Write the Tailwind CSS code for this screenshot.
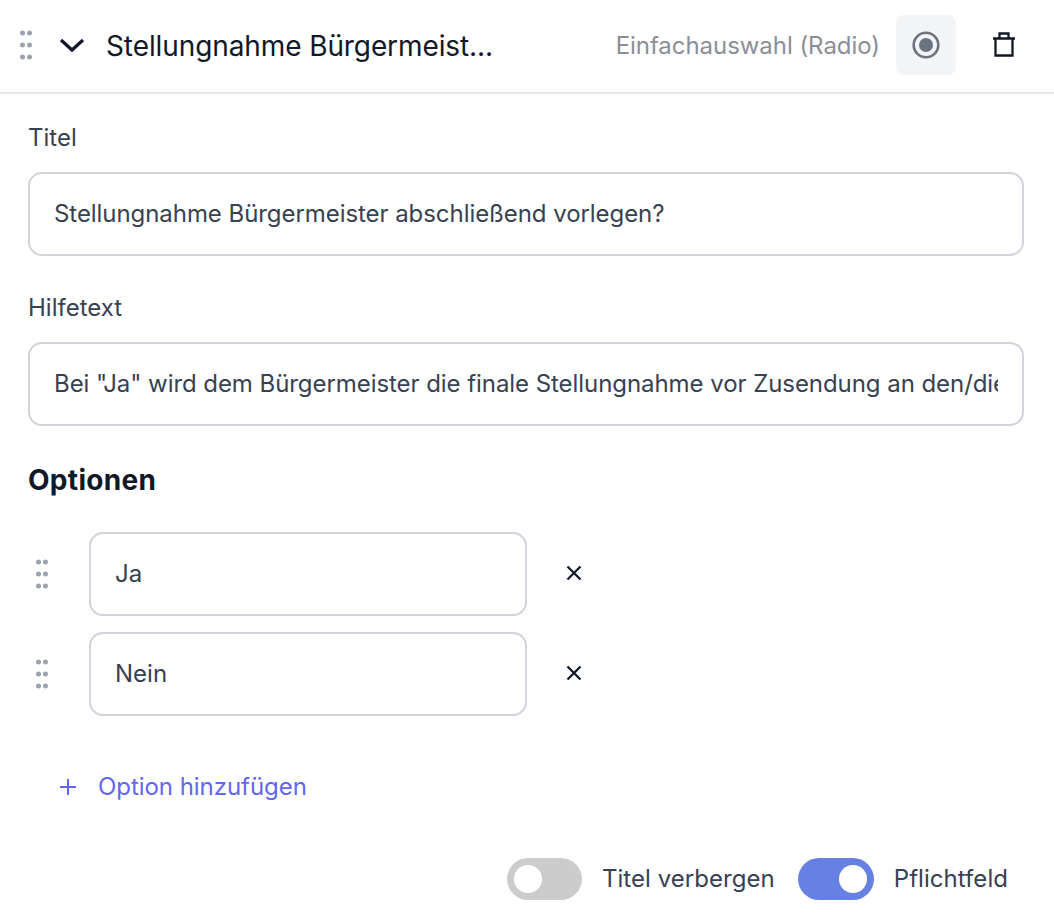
<!DOCTYPE html>
<html lang="de">
  <head>
    <meta charset="UTF-8" />
    <title>Stellungnahme Bürgermeister</title>
    <script src="https://cdn.jsdelivr.net/npm/@tailwindcss/browser@4"></script>
  </head>
  <body class="bg-white font-['Inter',sans-serif] text-[24px] text-[#374151] w-[1054px] h-[920px] overflow-hidden">
    <!-- Kopfzeile -->
    <div class="flex items-center h-[94px] border-b-2 border-[#e5e7eb] pb-[2px] pl-[20px] pr-[38px]">
      <svg class="w-[12px] h-[30px] text-[#9ca3af]" viewBox="0 0 12 30" fill="currentColor">
        <circle cx="2.5" cy="3" r="2.5" /><circle cx="9.5" cy="3" r="2.5" />
        <circle cx="2.5" cy="15" r="2.5" /><circle cx="9.5" cy="15" r="2.5" />
        <circle cx="2.5" cy="27" r="2.5" /><circle cx="9.5" cy="27" r="2.5" />
      </svg>
      <svg class="w-[26px] h-[16px] ml-[27px] text-[#111827]" viewBox="0 0 26 16" fill="none" stroke="currentColor" stroke-width="3.2">
        <path d="M2 3l11 10L24 3" />
      </svg>
      <span class="ml-[21px] mt-[2px] text-[28px] tracking-[-0.1px] text-[#111827] whitespace-nowrap">Stellungnahme Bürgermeist...</span>
      <span class="ml-auto mt-[2px] tracking-[-0.05px] text-[#8b8e96] whitespace-nowrap">Einfachauswahl (Radio)</span>
      <div class="ml-[16px] w-[60px] h-[60px] rounded-[8px] bg-[#f3f4f6] flex items-center justify-center">
        <svg class="w-[28px] h-[28px] text-[#6b7280]" viewBox="0 0 28 28" fill="none">
          <circle cx="14" cy="14" r="12.3" stroke="currentColor" stroke-width="2.6" />
          <circle cx="14" cy="14" r="7" fill="currentColor" />
        </svg>
      </div>
      <svg class="ml-[36px] mb-[1px] w-[24px] h-[25px] text-[#111827]" viewBox="0 0 24 25" fill="none" stroke="currentColor" stroke-width="2.3">
        <path d="M1 6.500h22M3.500 6.500V23.500h17V6.500M7.500 6.500V1.500h9v5" />
      </svg>
    </div>

    <div class="pl-[28px] pr-[30px]">
      <label class="block mt-[30px] leading-[28px]">Titel</label>
      <input class="block mt-[20px] w-full h-[84px] px-[24px] pb-[2px] border-2 border-[#d1d5db] rounded-[14px] tracking-[-0.06px] text-[#374151] outline-none" value="Stellungnahme Bürgermeister abschließend vorlegen?" />

      <label class="block mt-[38px] leading-[28px]">Hilfetext</label>
      <input class="block mt-[20px] w-full h-[84px] px-[24px] pb-[2px] border-2 border-[#d1d5db] rounded-[14px] tracking-[-0.06px] text-[#374151] outline-none" value='Bei "Ja" wird dem Bürgermeister die finale Stellungnahme vor Zusendung an den/die Antragsteller/in vorgelegt.' />

      <h3 class="mt-[36px] text-[28px] leading-[36px] font-bold tracking-[0.3px] text-[#111827]">Optionen</h3>

      <!-- Optionen -->
      <div class="mt-[34px] flex flex-col gap-[16px]">
        <div class="flex items-center">
          <svg class="ml-[8px] w-[12px] h-[30px] text-[#9ca3af]" viewBox="0 0 12 30" fill="currentColor">
            <circle cx="2.500" cy="3" r="2.500" /><circle cx="9.500" cy="3" r="2.500" />
            <circle cx="2.500" cy="15" r="2.500" /><circle cx="9.500" cy="15" r="2.500" />
            <circle cx="2.500" cy="27" r="2.500" /><circle cx="9.500" cy="27" r="2.500" />
          </svg>
          <input class="ml-[41px] w-[438px] h-[84px] px-[24px] pb-[2px] border-2 border-[#d1d5db] rounded-[14px] text-[#374151] outline-none" value="Ja" />
          <svg class="ml-[39px] mb-[2px] w-[16px] h-[16px] text-[#111827]" viewBox="0 0 16 16" fill="none" stroke="currentColor" stroke-width="2.300">
            <path d="M1.500 1.500l13 13M14.500 1.500l-13 13" />
          </svg>
        </div>
        <div class="flex items-center">
          <svg class="ml-[8px] w-[12px] h-[30px] text-[#9ca3af]" viewBox="0 0 12 30" fill="currentColor">
            <circle cx="2.500" cy="3" r="2.500" /><circle cx="9.500" cy="3" r="2.500" />
            <circle cx="2.500" cy="15" r="2.500" /><circle cx="9.500" cy="15" r="2.500" />
            <circle cx="2.500" cy="27" r="2.500" /><circle cx="9.500" cy="27" r="2.500" />
          </svg>
          <input class="ml-[41px] w-[438px] h-[84px] px-[24px] pb-[2px] border-2 border-[#d1d5db] rounded-[14px] text-[#374151] outline-none" value="Nein" />
          <svg class="ml-[39px] mb-[2px] w-[16px] h-[16px] text-[#111827]" viewBox="0 0 16 16" fill="none" stroke="currentColor" stroke-width="2.300">
            <path d="M1.500 1.500l13 13M14.500 1.500l-13 13" />
          </svg>
        </div>
      </div>

      <div class="mt-[55px] ml-[32px] flex items-center text-[#6366f1] leading-[32px]">
        <svg class="w-[16px] h-[16px]" viewBox="0 0 16 16" fill="none" stroke="currentColor" stroke-width="2">
          <path d="M8 0v16M0 8h16" />
        </svg>
        <span class="ml-[22px] tracking-[-0.05px]">Option hinzufügen</span>
      </div>

      <!-- Schalter -->
      <div class="mt-[55px] flex items-center justify-end pr-[16px]">
        <div class="w-[75px] h-[42px] rounded-full bg-[#cccccc] flex items-center pl-[7px]">
          <span class="w-[28px] h-[28px] rounded-full bg-white"></span>
        </div>
        <span class="ml-[20px] tracking-[0.05px]">Titel verbergen</span>
        <div class="ml-[23px] w-[76px] h-[42px] rounded-full bg-[#6680e3] flex items-center justify-end pr-[7px]">
          <span class="w-[28px] h-[28px] rounded-full bg-white"></span>
        </div>
        <span class="ml-[20px] tracking-[0.05px]">Pflichtfeld</span>
      </div>
    </div>
  </body>
</html>
